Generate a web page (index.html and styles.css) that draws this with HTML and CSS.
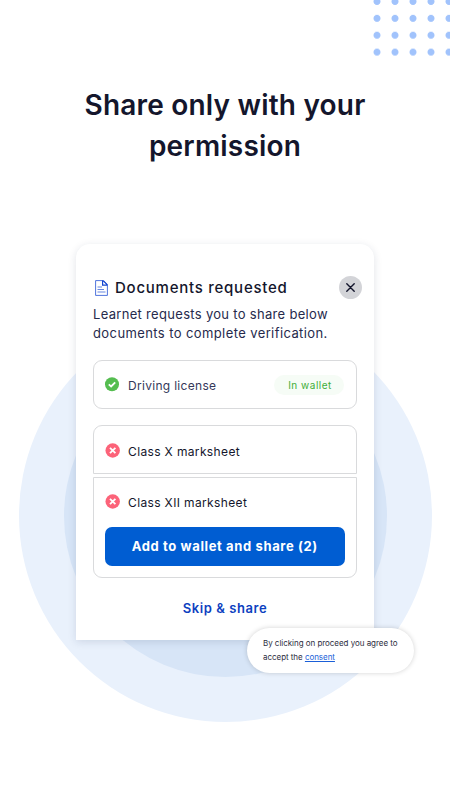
FILE: index.html
```html
<!DOCTYPE html>
<html lang="en">
<head>
    <meta charset="UTF-8">
    <meta name="viewport" content="width=device-width, initial-scale=1.0">
    <title>Share only with your permission</title>
    <link rel="stylesheet" href="styles.css">
</head>
<body>

<!-- Background decoration -->
<div class="dots"></div>
<div class="circle circle-outer"></div>
<div class="circle circle-inner"></div>

<h1>Share only with your<br>permission</h1>

<div class="card">
    <div class="card-header">
        <svg class="doc-icon" width="13" height="16" viewBox="0 0 13 16" fill="none" stroke="#1546d0">
            <path d="M0.6 0.6H8.2L12.4 4.8V15.4H0.6Z" stroke-opacity="0.75"/>
            <path d="M7.6 0.6V5.2H12.4M8.2 0.6L12.4 4.8" stroke-width="1.2"/>
            <path d="M2.5 7H7M2.5 9.5H9M2.5 12H10.5" stroke-opacity="0.65"/>
        </svg>
        <h2>Documents requested</h2>
        <button class="close-btn" aria-label="Close">
            <svg width="9" height="9" viewBox="0 0 9 9" stroke="#14162c" stroke-width="1.4" stroke-linecap="round">
                <path d="M0.8 0.8L8.2 8.2M8.2 0.8L0.8 8.2"/>
            </svg>
        </button>
    </div>
    <p class="card-text"><span class="line-one">Learnet requests you to share below</span><br>documents to complete verification.</p>

    <!-- Already in wallet -->
    <div class="doc-box in-wallet">
        <div class="doc-row">
            <svg class="status" width="15" height="15" viewBox="0 0 15 15">
                <circle cx="7" cy="7.3" r="7" fill="#55bd50"/>
                <path d="M3.8 7.4L6.1 9.5L10.2 5.3" fill="none" stroke="#fff" stroke-width="1.8"/>
            </svg>
            <span class="doc-name license">Driving license</span>
            <span class="tag">In wallet</span>
        </div>
    </div>

    <!-- Missing documents -->
    <div class="doc-box first">
        <div class="doc-row">
            <svg class="status" width="15" height="15" viewBox="0 0 15 15">
                <circle cx="7.7" cy="7.5" r="7.2" fill="#fc6379"/>
                <path d="M5 4.8L10.4 10.2M10.4 4.8L5 10.2" stroke="#fff" stroke-width="1.8"/>
            </svg>
            <span class="doc-name">Class X marksheet</span>
        </div>
    </div>
    <div class="doc-box last">
        <div class="doc-row">
            <svg class="status" width="15" height="15" viewBox="0 0 15 15">
                <circle cx="7.7" cy="7.5" r="7.2" fill="#fc6379"/>
                <path d="M5 4.8L10.4 10.2M10.4 4.8L5 10.2" stroke="#fff" stroke-width="1.8"/>
            </svg>
            <span class="doc-name">Class XII marksheet</span>
        </div>
        <button class="share-btn">Add to wallet and share (2)</button>
    </div>

    <a class="skip">Skip &amp; share</a>

    <div class="consent-note">By clicking on proceed you agree to<br>accept the <a class="consent">consent</a></div>
</div>

</body>
</html>
```

FILE: styles.css
```css
/* Basic Reset */
* {
    margin: 0;
    padding: 0;
    box-sizing: border-box;
}

body {
    position: relative;
    width: 450px;
    height: 800px;
    overflow: hidden;
    background-color: #fff;
    font-family: Inter, "Open Sans", sans-serif;
    color: #14162c;
    padding-top: 85px;
}

button {
    border: none;
    font-family: inherit;
    cursor: pointer;
}

/* Background decoration */
.dots {
    position: absolute;
    top: -7px;
    right: -8px;
    width: 90px;
    height: 68px;
    background-image: radial-gradient(circle, #a1c3fc 3.1px, rgba(161, 195, 252, 0) 3.9px);
    background-size: 18px 16.9px;
}

.circle {
    position: absolute;
    border-radius: 50%;
}

.circle-outer {
    left: 19px;
    top: 309px;
    width: 413px;
    height: 413px;
    background-color: #e9f1fc;
}

.circle-inner {
    left: 64px;
    top: 355px;
    width: 323px;
    height: 322px;
    background-color: #d7e5f7;
}

h1 {
    font-size: 28px;
    font-weight: 600;
    line-height: 41px;
    height: 158.5px;
    text-align: center;
    letter-spacing: 0.2px;
}

/* Card */
.card {
    position: relative;
    width: 297.5px;
    height: 396.5px;
    margin-left: 76px;
    padding: 32px 16.5px 0 17px;
    background-color: #fff;
    border-radius: 14px 14px 0 0;
    box-shadow: 0 2px 9px rgba(20, 40, 80, 0.13);
}

.card-header {
    display: flex;
    align-items: center;
    height: 24px;
    margin-right: -5px;
}

.doc-icon {
    margin: 0 7px 0 2px;
}

h2 {
    font-size: 15px;
    font-weight: 500;
    letter-spacing: 0.75px;
    white-space: nowrap;
}

.close-btn {
    display: flex;
    align-items: center;
    justify-content: center;
    width: 23px;
    height: 23px;
    margin-left: auto;
    border-radius: 50%;
    background-color: #d3d4d8;
}

.card-text {
    margin-top: 5px;
    font-size: 13px;
    line-height: 19px;
    letter-spacing: 0.4px;
    color: #262a4c;
    white-space: nowrap;
}

.line-one {
    letter-spacing: 0.31px;
}

/* Document rows */
.doc-box {
    height: 49px;
    padding: 0 12px 0 11px;
    border: 1px solid #d9dadc;
}

.in-wallet {
    margin: 17px 0 16.5px;
    border-radius: 9px;
}

.first {
    border-radius: 9px 9px 0 0;
}

.last {
    height: 101px;
    margin-top: 3px;
    border-radius: 0 0 9px 9px;
}

.doc-row {
    display: flex;
    align-items: center;
    height: 48px;
}

.last .doc-row {
    height: 47px;
}

.status {
    margin-right: 8px;
}

.doc-name {
    padding-top: 2px;
    font-size: 12px;
    letter-spacing: 0.36px;
}

.license {
    color: #34385a;
    letter-spacing: 0.3px;
}

.tag {
    width: 70px;
    margin-left: auto;
    padding-left: 2px;
    border-radius: 10px;
    background-color: #f6fcf6;
    color: #3fae38;
    font-size: 10px;
    line-height: 20px;
    text-align: center;
    letter-spacing: 0.5px;
}

.share-btn {
    display: block;
    width: 239.5px;
    height: 39.5px;
    margin-top: 1.5px;
    border-radius: 7px;
    background-color: #005dd2;
    color: #fff;
    font-size: 13px;
    font-weight: 700;
    letter-spacing: 0.62px;
}

.skip {
    display: block;
    margin-top: 19px;
    text-align: center;
    font-size: 13px;
    line-height: 22px;
    font-weight: 600;
    letter-spacing: 0.55px;
    color: #0d3fc0;
}

/* Consent bubble over the card corner */
.consent-note {
    position: absolute;
    left: 171px;
    top: 384px;
    width: 167px;
    height: 45px;
    padding: 8px 0 0 16px;
    border-radius: 23px;
    background-color: #fff;
    box-shadow: 0 0 5px rgba(0, 0, 0, 0.18);
    font-size: 8px;
    line-height: 14px;
    letter-spacing: -0.04px;
    color: #2c2d40;
    white-space: nowrap;
}

.consent {
    color: #1a5fd8;
    text-decoration: underline;
}
```
